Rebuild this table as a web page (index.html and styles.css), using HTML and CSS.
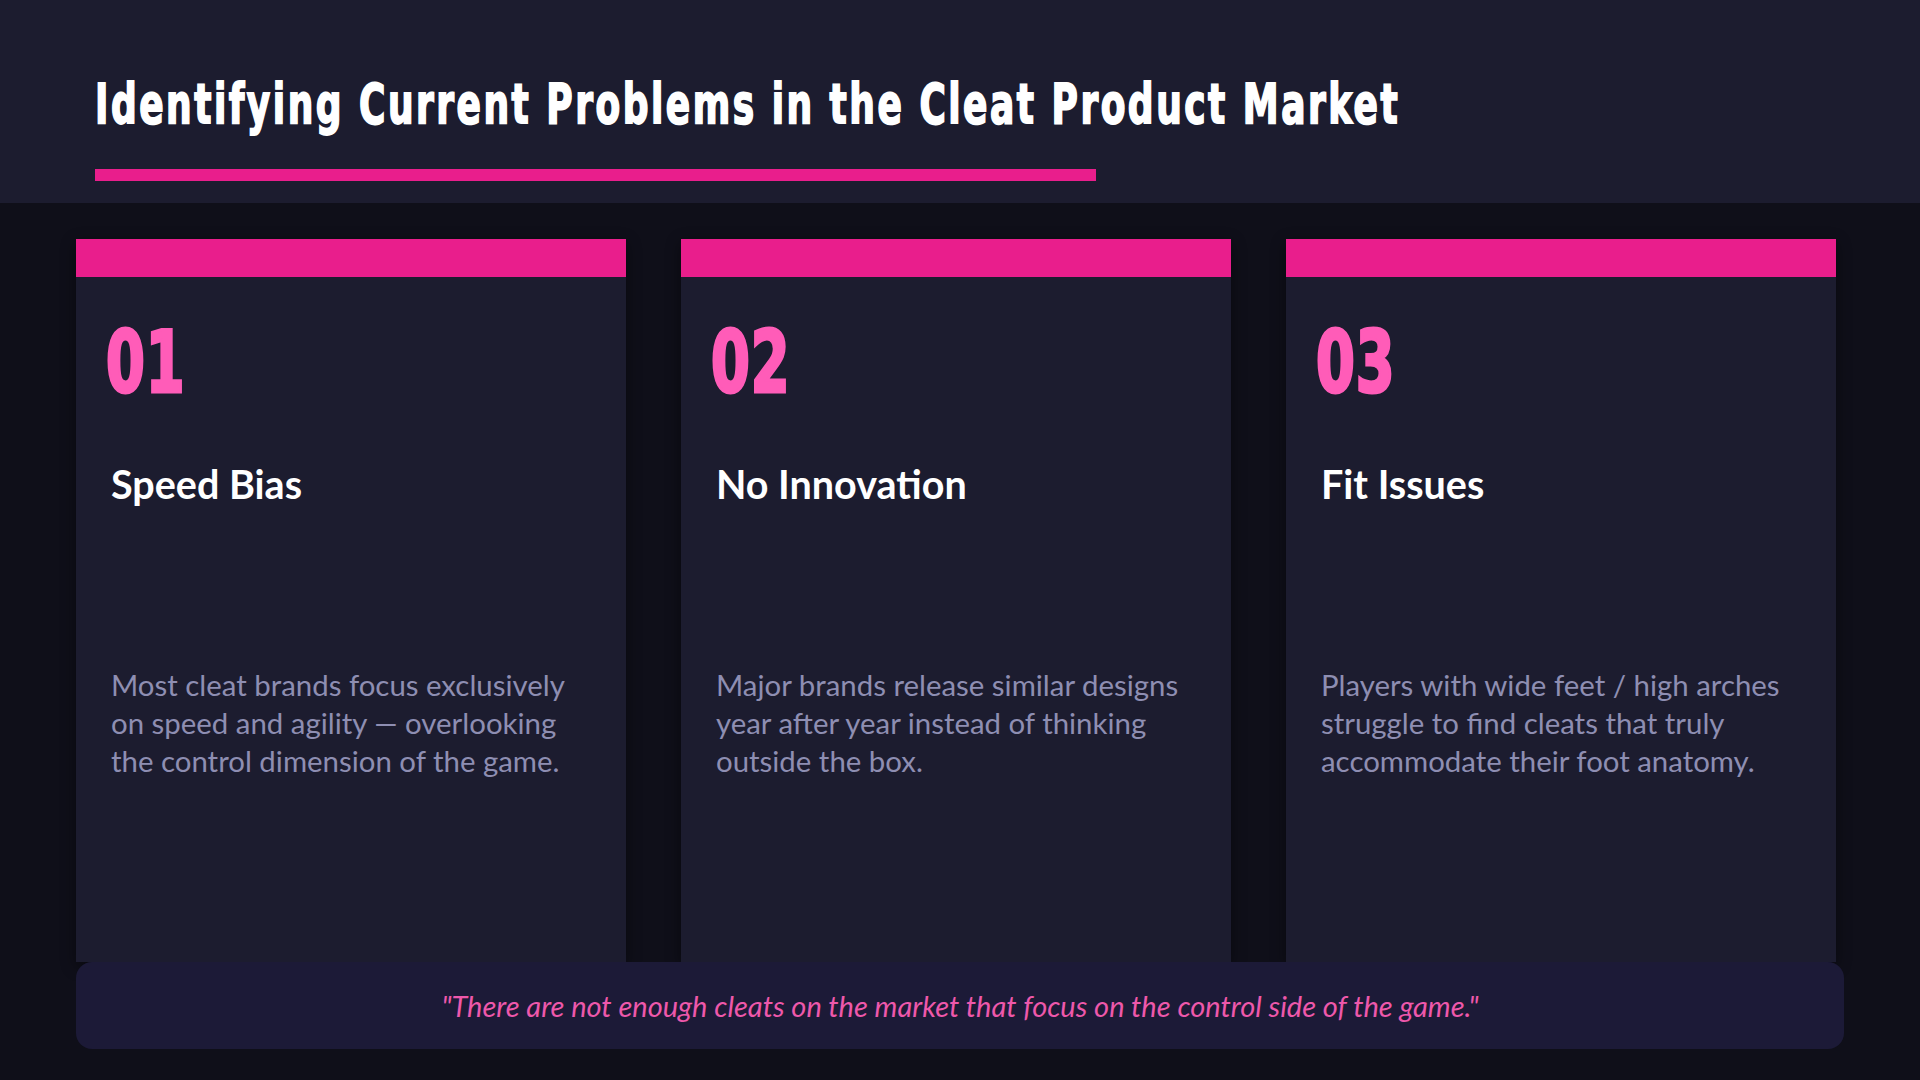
FILE: index.html
```html
<!DOCTYPE html>
<html lang="en">
<head>
<meta charset="utf-8">
<title>Identifying Current Problems in the Cleat Product Market</title>
<link rel="stylesheet" href="styles.css">
</head>
<body>
<div class="slide">
  <header class="header">
    <h1 class="title">Identifying Current Problems in the Cleat Product Market</h1>
    <div class="title-rule"></div>
  </header>
  <main class="content">
    <section class="cards">
      <article class="card">
        <div class="card-bar"></div>
        <div class="card-body">
          <div class="card-num">01</div>
          <h2 class="card-title">Speed Bias</h2>
          <p class="card-text">Most cleat brands focus exclusively on speed and agility — overlooking the control dimension of the game.</p>
        </div>
      </article>
      <article class="card">
        <div class="card-bar"></div>
        <div class="card-body">
          <div class="card-num">02</div>
          <h2 class="card-title">No Innovation</h2>
          <p class="card-text">Major brands release similar designs year after year instead of thinking outside the box.</p>
        </div>
      </article>
      <article class="card">
        <div class="card-bar"></div>
        <div class="card-body">
          <div class="card-num">03</div>
          <h2 class="card-title">Fit Issues</h2>
          <p class="card-text">Players with wide feet / high arches struggle to find cleats that truly accommodate their foot anatomy.</p>
        </div>
      </article>
    </section>
    <div class="quote">"There are not enough cleats on the market that focus on the control side of the game."</div>
  </main>
</div>
</body>
</html>
```

FILE: styles.css
```css
html, body {
  margin: 0;
  padding: 0;
}
body {
  background: #0f0f19;
  width: 1920px;
  height: 1080px;
  overflow: hidden;
  font-family: "Lato", "Open Sans", sans-serif;
}
.slide {
  width: 1920px;
  height: 1080px;
  display: flex;
  flex-direction: column;
}
.header {
  background: #1c1c2f;
  height: 203px;
  box-sizing: border-box;
  padding: 89px 0 0 95px;
}
.title {
  margin: 0;
  font-family: "DejaVu Sans Condensed", "DejaVu Sans", sans-serif;
  font-stretch: condensed;
  font-weight: 700;
  font-size: 40px;
  line-height: 40px;
  height: 40px;
  letter-spacing: 2.5px;
  color: #ffffff;
  white-space: nowrap;
  display: inline-block;
  transform-origin: 0 34px;
  transform: scaleY(1.37);
  -webkit-text-stroke: 1.3px #ffffff;
}
.title-rule {
  margin-top: 40px;
  width: 1001px;
  height: 12px;
  background: #e91e8c;
}
.content {
  padding: 36px 76px 0 76px;
  display: flex;
  flex-direction: column;
}
.cards {
  display: grid;
  grid-template-columns: repeat(3, 550px);
  column-gap: 55px;
}
.card {
  height: 723px;
  background: #1c1c2f;
  box-shadow: 0 4px 14px rgba(0, 0, 0, 0.45);
  display: flex;
  flex-direction: column;
}
.card-bar {
  height: 38px;
  background: #e91e8c;
}
.card-body {
  padding: 61px 35px 0 35px;
}
.card-num {
  font-family: "DejaVu Sans Condensed", "DejaVu Sans", sans-serif;
  font-stretch: condensed;
  font-weight: 700;
  font-size: 64px;
  line-height: 64px;
  height: 64px;
  color: #ff5cb8;
  margin-left: -5px;
  letter-spacing: 1px;
  transform-origin: 0 54px;
  transform: scale(0.97, 1.33);
  -webkit-text-stroke: 2.4px #ff5cb8;
}
.card-title {
  margin: 59px 0 0 0;
  font-family: "Lato", sans-serif;
  font-weight: 700;
  font-size: 39.5px;
  line-height: 46px;
  color: #ffffff;
}
.card-text {
  margin: 159px 0 0 0;
  font-family: "Lato", sans-serif;
  font-weight: 400;
  font-size: 29.4px;
  line-height: 38px;
  color: #8e8eb2;
}
.quote {
  height: 87px;
  margin-top: 0;
  background: #1c1a37;
  border-radius: 16px;
  display: flex;
  align-items: center;
  justify-content: center;
  font-family: "Lato", sans-serif;
  font-style: italic;
  font-size: 29px;
  color: #ee58ab;
}
```
